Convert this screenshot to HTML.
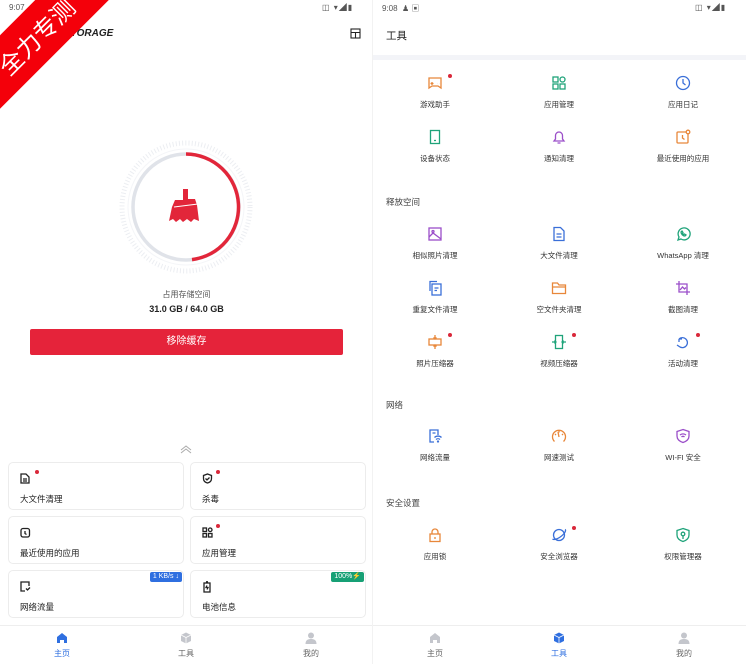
<!DOCTYPE html>
<html><head><meta charset="utf-8"><style>
*{margin:0;padding:0;box-sizing:border-box}
body{width:746px;height:664px;position:relative;overflow:hidden;background:#fff;font-family:"Liberation Sans","Noto Sans CJK SC",sans-serif;color:#222}
.a{position:absolute}
.st{font-size:8px;color:#555}
.card{position:absolute;width:176px;height:48px;border:1px solid #ececec;border-radius:5px;background:#fff}
.card svg{position:absolute;left:11px;top:10px}
.card .l{position:absolute;left:11px;top:30px;font-size:8.5px;color:#222}
.dot{position:absolute;width:4px;height:4px;border-radius:50%;background:#d9283a}
.t{position:absolute;width:124px;text-align:center;font-size:7.5px;color:#333}
.t svg{display:block;margin:0 auto 8px}
.sec{position:absolute;left:386px;font-size:8.5px;color:#444}
.nav{position:absolute;top:625px;width:373px;height:39px;border-top:1px solid #eee}
.ni{position:absolute;width:60px;text-align:center;font-size:8px;color:#666;top:6px}
.ni svg{display:block;margin:0 auto 4px}
</style></head><body>
<!-- LEFT -->
<div class="a st" style="left:9px;top:3px">9:07</div>
<div class="a st" style="left:322px;top:2px;letter-spacing:1px">◫ ▾◢▮</div>
<div class="a" style="left:64px;top:28px;font-size:10px;font-weight:bold;font-style:italic">STORAGE</div>
<svg class="a" style="left:350px;top:28px" width="11" height="11" viewBox="0 0 11 11" fill="none" stroke="#222" stroke-width="1.1"><rect x="1" y="1" width="9" height="9"/><path d="M1 4.5h9M5.5 4.5v5.5"/></svg>
<div class="a" style="left:-64px;top:10px;width:200px;height:52px;background:#f4000a;transform:rotate(-45deg);color:#fff;font-size:24px;text-align:center;line-height:52px;font-family:'Noto Sans CJK SC',sans-serif">全力专测</div>

<svg class="a" style="left:116px;top:137px" width="140" height="140" viewBox="0 0 140 140">
<circle cx="70" cy="70" r="64" fill="none" stroke="#eceef2" stroke-width="5" stroke-dasharray="1 2.2"/>
<circle cx="70" cy="70" r="58" fill="none" stroke="#f4f5f8" stroke-width="1"/>
<circle cx="70" cy="70" r="53" fill="none" stroke="#e0e3e9" stroke-width="3.5"/>
<path d="M70 17 A53 53 0 0 1 76 122.6" fill="none" stroke="#e2263a" stroke-width="3.5"/>
<circle cx="70" cy="70" r="50" fill="#fff"/>
<path d="M67 52h5v10h7l2 6 2 16-5-2-3 3-4-3-4 3-3-3-4 3-3-3-4 2 3-14 3-7h8z" fill="#e2263a"/>
<path d="M58 70l24-3" stroke="#fff" stroke-width="1"/>
</svg>
<div class="a" style="left:0;width:373px;top:289px;text-align:center;font-size:8px;color:#555">占用存储空间</div>
<div class="a" style="left:0;width:373px;top:304px;text-align:center;font-size:9px;font-weight:bold">31.0 GB / 64.0 GB</div>
<div class="a" style="left:30px;top:329px;width:313px;height:26px;background:#e5233a;border-radius:2px;color:#fff;font-size:10px;text-align:center;line-height:26px">移除缓存</div>
<svg class="a" style="left:180px;top:445px" width="12" height="9" viewBox="0 0 12 9" fill="none" stroke="#aaa" stroke-width="1"><path d="M1 5l5-4 5 4M1 8l5-4 5 4"/></svg>

<div class="card" style="left:8px;top:462px"><svg width="10" height="11" viewBox="0 0 10 11" fill="none" stroke="#222" stroke-width="1.3"><path d="M1 1h5l3 3v6H1z M3 6h4M3 8h4"/></svg><div class="dot" style="left:26px;top:7px"></div><div class="l">大文件清理</div></div>
<div class="card" style="left:190px;top:462px"><svg width="11" height="11" viewBox="0 0 11 11" fill="none" stroke="#222" stroke-width="1.3"><path d="M5.5 1l4 1.5v3c0 2.5-2 4-4 4.5-2-.5-4-2-4-4.5v-3z M3.5 5.5l1.5 1.5 2.5-2.5"/></svg><div class="dot" style="left:25px;top:7px"></div><div class="l">杀毒</div></div>
<div class="card" style="left:8px;top:516px"><svg width="11" height="11" viewBox="0 0 11 11" fill="none" stroke="#222" stroke-width="1.3"><rect x="1" y="1.5" width="8.5" height="8.5" rx="2"/><path d="M5 4v2.5l1.5 1"/></svg><div class="l">最近使用的应用</div></div>
<div class="card" style="left:190px;top:516px"><svg width="11" height="11" viewBox="0 0 11 11" fill="none" stroke="#222" stroke-width="1.3"><rect x="1" y="1" width="3.5" height="3.5"/><rect x="1" y="6.5" width="3.5" height="3.5"/><rect x="6.5" y="6.5" width="3.5" height="3.5"/><circle cx="8.2" cy="2.8" r="1.8"/></svg><div class="dot" style="left:25px;top:7px"></div><div class="l">应用管理</div></div>
<div class="card" style="left:8px;top:570px"><svg width="11" height="11" viewBox="0 0 11 11" fill="none" stroke="#222" stroke-width="1.3"><path d="M9 5V1H1v9h4M6 7.5l1.5 1.5L10 6.5"/></svg><div class="a" style="right:1px;top:1px;background:#2f6fe0;color:#fff;font-size:7px;padding:0 3px;border-radius:2px;line-height:10px">1 KB/s ↓</div><div class="l">网络流量</div></div>
<div class="card" style="left:190px;top:570px"><svg width="10" height="12" viewBox="0 0 10 12" fill="none" stroke="#222" stroke-width="1.3"><rect x="2" y="2" width="6" height="9"/><path d="M4 0.8h2M5 4.5l-1 2h2l-1 2"/></svg><div class="a" style="right:1px;top:1px;background:#17a075;color:#fff;font-size:7px;padding:0 3px;border-radius:2px;line-height:10px">100%⚡</div><div class="l">电池信息</div></div>

<div class="nav" style="left:0">
<div class="ni" style="left:32px;color:#2f6fe0"><svg width="12" height="12" viewBox="0 0 12 12"><path d="M1 5L6 1l5 4v6H8V8H4v3H1z" fill="#2f6fe0"/></svg>主页</div>
<div class="ni" style="left:156px"><svg width="12" height="12" viewBox="0 0 12 12"><path d="M6 0.5l5 2.5v6L6 11.5 1 9V3z" fill="#c4c6cc"/><path d="M1 3l5 2.5 5-2.5M6 5.5v6" stroke="#fff" stroke-width=".8" fill="none"/></svg>工具</div>
<div class="ni" style="left:281px"><svg width="12" height="12" viewBox="0 0 12 12" fill="#c4c6cc"><circle cx="6" cy="3.5" r="3"/><path d="M0.5 12c0-4 2.5-5 5.5-5s5.5 1 5.5 5z"/></svg>我的</div>
</div>

<!-- RIGHT -->
<div class="a" style="left:372px;top:0;width:1px;height:664px;background:#f2f2f2"></div>
<div class="a st" style="left:382px;top:3px">9:08 &nbsp;♟ ▣</div>
<div class="a st" style="left:695px;top:2px;letter-spacing:1px">◫ ▾◢▮</div>
<div class="a" style="left:386px;top:28px;font-size:10.5px;color:#222">工具</div>
<div class="a" style="left:373px;top:55px;width:373px;height:5px;background:#f3f4f8"></div>

<div class="t" style="left:373px;top:75px"><svg width="16" height="16" viewBox="0 0 16 16" fill="none" stroke="#e8873a" stroke-width="1.3"><path d="M2 3h12v10l-3-2H5l-3 2z M5 7v3M3.5 8.5h3M10 8.5h.1M12 8.5h.1"/></svg>游戏助手</div>
<div class="dot" style="left:448px;top:74px"></div>
<div class="t" style="left:497px;top:75px"><svg width="16" height="16" viewBox="0 0 16 16" fill="none" stroke="#1fa37a" stroke-width="1.3"><rect x="2" y="2" width="5" height="5"/><rect x="2" y="9" width="5" height="5"/><rect x="9" y="9" width="5" height="5"/><circle cx="11.5" cy="4.5" r="2.5"/></svg>应用管理</div>
<div class="t" style="left:621px;top:75px"><svg width="16" height="16" viewBox="0 0 16 16" fill="none" stroke="#3a6fd8" stroke-width="1.3"><circle cx="8" cy="8" r="6.5"/><path d="M8 4v4l2.5 2"/></svg>应用日记</div>
<div class="t" style="left:373px;top:129px"><svg width="16" height="16" viewBox="0 0 16 16" fill="none" stroke="#1fa37a" stroke-width="1.3"><rect x="3.5" y="1.5" width="9" height="13"/><path d="M7 11.5h2"/></svg>设备状态</div>
<div class="t" style="left:497px;top:129px"><svg width="16" height="16" viewBox="0 0 16 16" fill="none" stroke="#9b4fc9" stroke-width="1.3"><path d="M3 12h10l-1.5-2V6.5a3.5 3.5 0 0 0-7 0V10z M6.5 14h3"/></svg>通知清理</div>
<div class="t" style="left:621px;top:129px"><svg width="16" height="16" viewBox="0 0 16 16" fill="none" stroke="#e8873a" stroke-width="1.3"><rect x="2" y="3" width="11" height="11" rx="1"/><path d="M7.5 6v3l2 1.5"/><circle cx="13" cy="3" r="1.8" fill="#fff"/></svg>最近使用的应用</div>

<div class="sec" style="top:196px">释放空间</div>
<div class="t" style="left:373px;top:226px"><svg width="16" height="16" viewBox="0 0 16 16" fill="none" stroke="#9b4fc9" stroke-width="1.3"><rect x="2" y="2" width="12" height="12"/><path d="M2 11l4-4 8 6"/><circle cx="6" cy="5.5" r="1"/></svg>相似照片清理</div>
<div class="t" style="left:497px;top:226px"><svg width="16" height="16" viewBox="0 0 16 16" fill="none" stroke="#3a6fd8" stroke-width="1.3"><path d="M3 1.5h6.5l3.5 3.5v9.5H3z M5.5 8h5M5.5 11h5"/></svg>大文件清理</div>
<div class="t" style="left:621px;top:226px"><svg width="16" height="16" viewBox="0 0 16 16" fill="none" stroke="#1fa37a" stroke-width="1.3"><path d="M3 14l1-3a6 6 0 1 1 2 2z M6 6c0 2 2 4 4 4l1-1-1.5-1-1 .5-1-1 .5-1-1-1.5z"/></svg>WhatsApp 清理</div>
<div class="t" style="left:373px;top:280px"><svg width="16" height="16" viewBox="0 0 16 16" fill="none" stroke="#3a6fd8" stroke-width="1.3"><path d="M3 11V1.5h7"/><rect x="5" y="4" width="9" height="11"/><path d="M7.5 8h4M7.5 10.5h2.5"/></svg>重复文件清理</div>
<div class="t" style="left:497px;top:280px"><svg width="16" height="16" viewBox="0 0 16 16" fill="none" stroke="#e8873a" stroke-width="1.3"><path d="M1.5 3h5l1.5 2h6.5v8.5h-13z M1.5 7h13"/></svg>空文件夹清理</div>
<div class="t" style="left:621px;top:280px"><svg width="16" height="16" viewBox="0 0 16 16" fill="none" stroke="#9b4fc9" stroke-width="1.3"><path d="M4 1v11h11M1 4h11v11"/><path d="M5 10l2.5-3 2 2 1.5-1.5" /></svg>截图清理</div>
<div class="t" style="left:373px;top:334px"><svg width="16" height="16" viewBox="0 0 16 16" fill="none" stroke="#e8873a" stroke-width="1.3"><rect x="2" y="5" width="12" height="6"/><path d="M8 1v4M6.5 3.5L8 5l1.5-1.5M8 15v-4M6.5 12.5L8 11l1.5 1.5"/></svg>照片压缩器</div>
<div class="dot" style="left:448px;top:333px"></div>
<div class="t" style="left:497px;top:334px"><svg width="16" height="16" viewBox="0 0 16 16" fill="none" stroke="#1fa37a" stroke-width="1.3"><rect x="4.5" y="1.5" width="7" height="13"/><path d="M1 8h4M3.5 6.5L5 8 3.5 9.5M15 8h-4M12.5 6.5L11 8l1.5 1.5"/></svg>视频压缩器</div>
<div class="dot" style="left:572px;top:333px"></div>
<div class="t" style="left:621px;top:334px"><svg width="16" height="16" viewBox="0 0 16 16" fill="none" stroke="#3a6fd8" stroke-width="1.3"><path d="M4 5a5 5 0 1 1 1 8M4 5v3M4 5h3M2 11l3 2"/></svg>活动清理</div>
<div class="dot" style="left:696px;top:333px"></div>

<div class="sec" style="top:399px">网络</div>
<div class="t" style="left:373px;top:428px"><svg width="16" height="16" viewBox="0 0 16 16" fill="none" stroke="#3a6fd8" stroke-width="1.3"><path d="M11 7V2H3v12h4M5.5 5h3M7.5 9.5a5 5 0 0 1 7 0M9 11.5a3 3 0 0 1 4 0"/><circle cx="11" cy="13.5" r=".5"/></svg>网络流量</div>
<div class="t" style="left:497px;top:428px"><svg width="16" height="16" viewBox="0 0 16 16" fill="none" stroke="#e8873a" stroke-width="1.3"><path d="M3.5 13.5a6.5 6.5 0 1 1 9 0M8 9l-1-5M8 3v1.5M4 6l1 1M12 6l-1 1"/></svg>网速测试</div>
<div class="t" style="left:621px;top:428px"><svg width="16" height="16" viewBox="0 0 16 16" fill="none" stroke="#9b4fc9" stroke-width="1.3"><path d="M8 1.5l6 2v4.5c0 3.5-3 5.5-6 6.5-3-1-6-3-6-6.5V3.5z M5 7a4.5 4.5 0 0 1 6 0M6.5 9a2 2 0 0 1 3 0"/></svg>WI-FI 安全</div>

<div class="sec" style="top:497px">安全设置</div>
<div class="t" style="left:373px;top:527px"><svg width="16" height="16" viewBox="0 0 16 16" fill="none" stroke="#e8873a" stroke-width="1.3"><rect x="3" y="7" width="10" height="7.5"/><path d="M5 7V5a3 3 0 0 1 6 0v2M8 10v2"/></svg>应用锁</div>
<div class="t" style="left:497px;top:527px"><svg width="16" height="16" viewBox="0 0 16 16" fill="none" stroke="#3a6fd8" stroke-width="1.3"><circle cx="8" cy="8" r="5.5"/><path d="M1.5 12c2 1.5 8-1 12-6 1-1.5 1.5-3 .5-3.5"/></svg>安全浏览器</div>
<div class="dot" style="left:572px;top:526px"></div>
<div class="t" style="left:621px;top:527px"><svg width="16" height="16" viewBox="0 0 16 16" fill="none" stroke="#1fa37a" stroke-width="1.3"><path d="M8 1.5l6 2v4.5c0 3.5-3 5.5-6 6.5-3-1-6-3-6-6.5V3.5z"/><circle cx="8" cy="7" r="1.8"/><path d="M8 9v3"/></svg>权限管理器</div>

<div class="nav" style="left:373px">
<div class="ni" style="left:32px"><svg width="12" height="12" viewBox="0 0 12 12"><path d="M1 5L6 1l5 4v6H8V8H4v3H1z" fill="#c4c6cc"/></svg>主页</div>
<div class="ni" style="left:156px;color:#2f6fe0"><svg width="12" height="12" viewBox="0 0 12 12"><path d="M6 0.5l5 2.5v6L6 11.5 1 9V3z" fill="#2f6fe0"/><path d="M1 3l5 2.5 5-2.5M6 5.5v6" stroke="#fff" stroke-width=".8" fill="none"/></svg>工具</div>
<div class="ni" style="left:281px"><svg width="12" height="12" viewBox="0 0 12 12" fill="#c4c6cc"><circle cx="6" cy="3.5" r="3"/><path d="M0.5 12c0-4 2.5-5 5.5-5s5.5 1 5.5 5z"/></svg>我的</div>
</div>
</body></html>
